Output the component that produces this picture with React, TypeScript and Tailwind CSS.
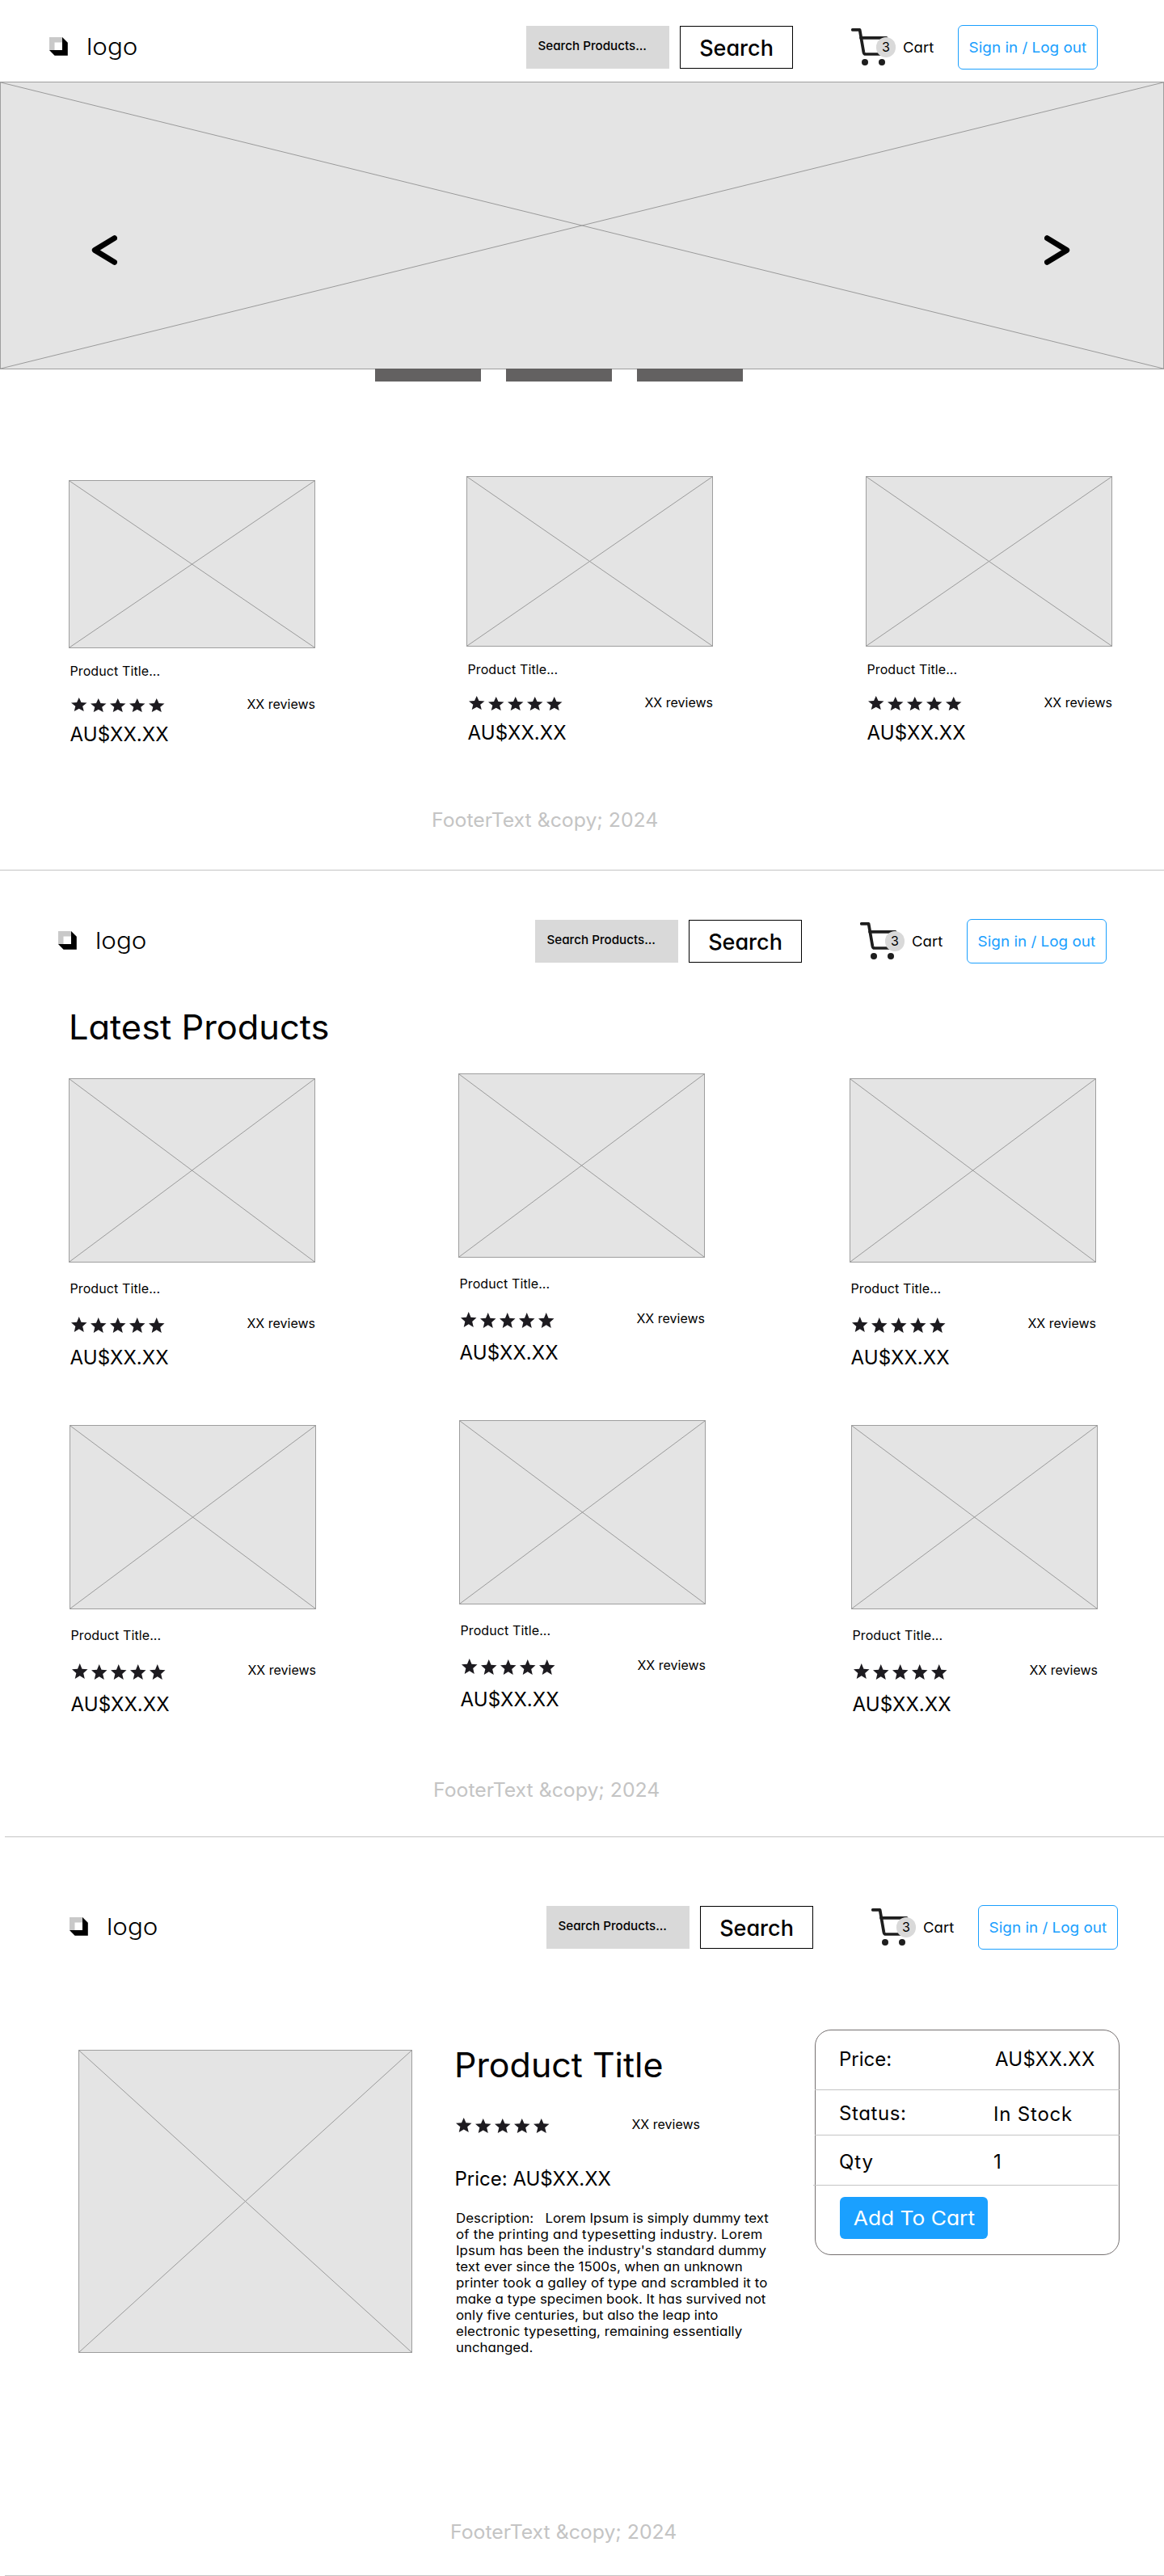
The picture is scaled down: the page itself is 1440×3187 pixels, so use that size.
type HeaderProps = { indent: string };

function LogoMark() {
  return (
    <svg className="mt-[15px] h-[23px] w-[23px] shrink-0" viewBox="0 0 23 23">
      <rect width="16.2" height="16.2" fill="#c9c9c9" />
      <path d="M16 0L22.8 6.7V22.8H6.6L0 16H16Z" fill="#000" />
      <rect x="6.5" y="6.5" width="9.5" height="9.5" fill="#fff" />
    </svg>
  );
}

function CartIcon() {
  return (
    <div className="relative mt-1 h-[46px] w-[46px] shrink-0">
      <svg className="h-full w-full" viewBox="0 0 46 46" fill="none">
        <path
          d="M1.8 1.9H10.6L15.4 29.6Q15.9 32 18 32H42"
          stroke="#1e1e1e"
          strokeWidth="3.7"
          strokeLinecap="round"
          strokeLinejoin="round"
        />
        <path d="M12 11.8H43.5" stroke="#1e1e1e" strokeWidth="3.7" strokeLinecap="round" />
        <circle cx="17" cy="42" r="4" fill="#1e1e1e" />
        <circle cx="38" cy="42" r="4" fill="#1e1e1e" />
      </svg>
      <span className="absolute left-[31px] top-[11px] flex h-[25px] w-6 items-center justify-center rounded-full bg-[#d9d9d9] pb-0.5 text-[16px] leading-none">
        3
      </span>
    </div>
  );
}

function Header({ indent }: HeaderProps) {
  return (
    <header className={`flex h-[101px] items-start pt-[31px] ${indent}`}>
      <LogoMark />
      <span className="ml-[23px] mt-[13px] w-[544px] shrink-0 text-[28.5px] font-light leading-[28px]">
        <span className="inline-block origin-left scale-x-[1.1]">logo</span>
      </span>
      <div className="mt-px h-[53px] w-[177px] shrink-0 bg-[#d9d9d9] pl-[14.5px] pt-[17px] text-[15.2px] font-medium leading-[15px]">
        Search Products...
      </div>
      <button className="ml-[13px] mt-px flex h-[53px] w-[140px] shrink-0 items-center justify-center border border-black pt-px text-[27px] font-medium leading-none">
        Search
      </button>
      <div className="ml-[72px] flex w-[132px] shrink-0 items-start">
        <CartIcon />
        <span className="ml-[18px] mt-[19px] origin-left scale-x-[1.06] text-[17.5px] leading-[18px]">
          Cart
        </span>
      </div>
      <button className="flex h-[55px] w-[173px] shrink-0 items-center justify-center whitespace-nowrap rounded-md border border-[#1a9ffe] text-[17.5px] leading-none text-[#1a9ffe]">
        <span className="inline-block scale-x-[1.08]">Sign in / Log out</span>
      </button>
    </header>
  );
}

function Placeholder({ size }: { size: string }) {
  return (
    <div className={`border border-[#9e9e9e] bg-[#e4e4e4] ${size}`}>
      <svg className="block h-full w-full" viewBox="0 0 100 100" preserveAspectRatio="none">
        <path
          d="M0 0L100 100M100 0L0 100"
          stroke="#9a9a9a"
          strokeWidth="1"
          vectorEffect="non-scaling-stroke"
          fill="none"
        />
      </svg>
    </div>
  );
}

function Stars({ height }: { height: string }) {
  return (
    <div className="flex gap-[4.5px]">
      {[0, 1, 2, 3, 4].map((i) => (
        <svg
          key={i}
          className={`w-[19.5px] ${height} ${i === 0 ? "" : "mt-px"}`}
          viewBox="2 2 20 19"
          preserveAspectRatio="none"
          fill="#1d1b20"
        >
          <path d="M12 17.27 18.18 21l-1.64-7.03L22 9.24l-7.19-.61L12 2 9.19 8.63 2 9.24l5.46 4.73L5.82 21z" />
        </svg>
      ))}
    </div>
  );
}

function Reviews() {
  return <span className="text-[16px] leading-[16px]">XX reviews</span>;
}

type CardProps = { compact?: boolean; image: string; className?: string };

function ProductCard({ compact = false, image, className = "" }: CardProps) {
  return (
    <article className={`w-[305px] shrink-0 ${className}`}>
      <Placeholder size={image} />
      <p
        className={`pl-[1.5px] text-[16px] leading-[16px] tracking-[0.1px] ${compact ? "mt-5" : "mt-6"}`}
      >
        Product Title...
      </p>
      <div
        className={`flex items-start justify-between pl-[3px] ${compact ? "mt-[25px] h-[18px]" : "mt-[27px] h-5"}`}
      >
        <Stars height={compact ? "h-[17px]" : "h-[19px]"} />
        <Reviews />
      </div>
      <p
        className={`-mb-px pl-[1.5px] text-[24px] leading-[24px] tracking-[0.1px] ${compact ? "mt-[16px]" : "mt-[19px]"}`}
      >
        AU$XX.XX
      </p>
    </article>
  );
}

function Footer({ className, line }: { className: string; line: string }) {
  return (
    <footer>
      <p className={`text-[24px] leading-[24px] text-[#c4c4c4] ${className}`}>
        <span className="inline-block origin-left scale-x-[1.033]">FooterText &amp;copy; 2024</span>
      </p>
      <div className={`h-px bg-[#c4c4c4] ${line}`} />
    </footer>
  );
}

function Chevron({ flip = false }: { flip?: boolean }) {
  return (
    <svg className="h-[37px] w-8" viewBox="0 0 32 37" fill="none">
      <path
        d={flip ? "M3.4 3.6L27.8 18.5L3.4 33.4" : "M28.6 3.6L4.2 18.5L28.6 33.4"}
        stroke="#000"
        strokeWidth="6.8"
        strokeLinecap="round"
        strokeLinejoin="round"
      />
    </svg>
  );
}

function HomePage() {
  return (
    <section>
      <Header indent="pl-[61px]" />
      <div className="relative">
        <Placeholder size="h-[356px] w-full" />
        <div className="absolute inset-x-0 top-[190px] flex justify-between pl-[113px] pr-[116px]">
          <Chevron />
          <Chevron flip />
        </div>
      </div>
      <div className="relative -mt-px flex gap-[31px] pl-[464px]">
        <span className="h-4 w-[131px] bg-[#636161]" />
        <span className="h-4 w-[131px] bg-[#636161]" />
        <span className="h-4 w-[131px] bg-[#636161]" />
      </div>
      <div className="mt-[117px] flex items-start pl-[85px]">
        <ProductCard compact className="mt-[5px]" image="h-[208px] w-full" />
        <ProductCard compact className="ml-[187px]" image="h-[211px] w-full" />
        <ProductCard compact className="ml-[189px]" image="h-[211px] w-full" />
      </div>
      <Footer className="mt-[83px] pl-[533.5px]" line="mt-[49px]" />
    </section>
  );
}

function LatestPage() {
  return (
    <section className="pt-[29px]">
      <Header indent="pl-[72px]" />
      <h1 className="mt-[43px] pl-[84.5px] text-[42px] leading-[42px]">
        <span className="inline-block origin-left scale-x-[1.033]">Latest Products</span>
      </h1>
      <div className="mt-[36px] flex items-start pl-[85px]">
        <ProductCard className="mt-1.5" image="h-[228px] w-full" />
        <ProductCard className="ml-[177px]" image="h-[228px] w-full" />
        <ProductCard className="ml-[179px] mt-1.5" image="h-[228px] w-full" />
      </div>
      <div className="mt-[66px] flex items-start pl-[86px]">
        <ProductCard className="mt-1.5" image="h-[228px] w-full" />
        <ProductCard className="ml-[177px]" image="h-[228px] w-full" />
        <ProductCard className="ml-[180px] mt-1.5" image="h-[228px] w-full" />
      </div>
      <Footer className="mt-[83px] pl-[535.5px]" line="mt-[45px] ml-[6px]" />
    </section>
  );
}

const description = [
  { text: "Description:   Lorem Ipsum is simply dummy text", spacing: "tracking-[0px]" },
  { text: "of the printing and typesetting industry. Lorem", spacing: "tracking-[0.18px]" },
  { text: "Ipsum has been the industry's standard dummy", spacing: "tracking-[0.06px]" },
  { text: "text ever since the 1500s, when an unknown", spacing: "tracking-[0px]" },
  { text: "printer took a galley of type and scrambled it to", spacing: "tracking-[0.1px]" },
  { text: "make a type specimen book. It has survived not", spacing: "tracking-[0px]" },
  { text: "only five centuries, but also the leap into", spacing: "tracking-[0px]" },
  { text: "electronic typesetting, remaining essentially", spacing: "tracking-[0.05px]" },
  { text: "unchanged.", spacing: "tracking-[0px]" },
];

function PurchaseBox() {
  return (
    <aside className="h-[279px] w-[377px] shrink-0 rounded-[20px] border border-[#757070] text-[24px] leading-[24px]">
      <div className="-mx-px flex h-[74px] border-b border-[#c4c4c4] pl-[30px] pt-[24px]">
        <span className="w-[193px]">Price:</span>
        <span className="tracking-[0.25px]">AU$XX.XX</span>
      </div>
      <div className="-mx-px flex h-[56px] border-b border-[#c4c4c4] pl-[30px] pt-[17px]">
        <span className="w-[191px] tracking-[0.6px]">Status:</span>
        <span className="pt-px tracking-[0.8px]">In Stock</span>
      </div>
      <div className="-ml-[3px] mr-px flex h-[62px] border-b border-[#c4c4c4] pl-[32px] pt-[21px]">
        <span className="w-[191px] tracking-[0.9px]">Qty</span>
        <span>1</span>
      </div>
      <button className="ml-[30px] mt-[14px] flex h-[52px] w-[183px] items-center justify-center whitespace-nowrap rounded-md bg-[#1aa0ff] text-[24.5px] text-white">
        <span className="inline-block scale-x-[1.075]">Add To Cart</span>
      </button>
    </aside>
  );
}

function ProductPage() {
  return (
    <section className="pt-[53px]">
      <Header indent="pl-[86px]" />
      <div className="mt-[84px] flex items-start pl-[97px]">
        <div className="mt-[25px] w-[413px] shrink-0">
          <Placeholder size="h-[375px] w-full" />
        </div>
        <div className="ml-[54px] mt-[23px] w-[444px] shrink-0">
          <h1 className="-ml-[2px] text-[42px] leading-[42px]">
            <span className="inline-block origin-left scale-x-[1.022]">Product Title</span>
          </h1>
          <div className="mt-[44px] flex h-5 w-[302px] items-start justify-between">
            <Stars height="h-[18px]" />
            <Reviews />
          </div>
          <p className="-ml-[1.5px] mt-[44px] text-[24px] leading-[24px]">Price: AU$XX.XX</p>
          <div className="mt-[26px] w-[380px] origin-left scale-x-[1.055] whitespace-pre text-[16px] leading-[20px]">
            {description.map((row) => (
              <p key={row.text} className={row.spacing}>
                {row.text}
              </p>
            ))}
          </div>
        </div>
        <PurchaseBox />
      </div>
      <Footer className="mt-[207px] pl-[556.5px]" line="mt-[41px] ml-[6px]" />
    </section>
  );
}

export default function App() {
  return (
    <main className="w-[1440px] overflow-hidden bg-white font-['Inter',sans-serif] text-black [font-feature-settings:'cv11']">
      <HomePage />
      <LatestPage />
      <ProductPage />
    </main>
  );
}
